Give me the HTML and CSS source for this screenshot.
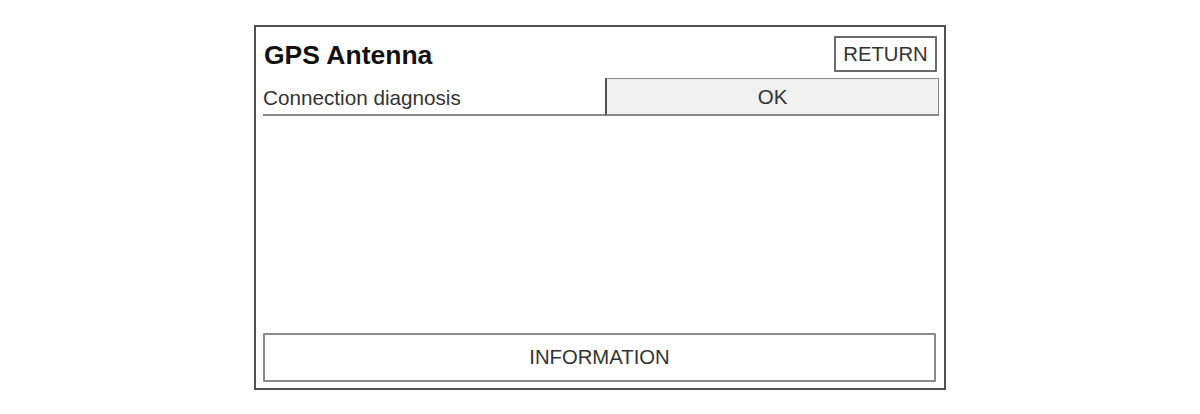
FILE: index.html
```html
<!DOCTYPE html>
<html>
<head>
<meta charset="utf-8">
<link rel="stylesheet" href="styles.css">
</head>
<body>
<div class="frame">
  <div class="header">
    <h1 class="title">GPS Antenna</h1>
    <div class="return-btn">RETURN</div>
  </div>
  <div class="row">
    <div class="label">Connection diagnosis</div>
    <div class="value">OK</div>
  </div>
  <div class="spacer"></div>
  <div class="info-btn">INFORMATION</div>
</div>
</body>
</html>
```
FILE: styles.css
```css
html, body {
  margin: 0;
  padding: 0;
  background: #ffffff;
}
body {
  font-family: "Liberation Sans", Arial, sans-serif;
  color: #2a2a2a;
}
.frame {
  box-sizing: border-box;
  width: 692px;
  height: 365px;
  margin: 25px auto 0;
  border: 2px solid #505050;
  padding: 9px 5px 6px 7px;
  display: flex;
  flex-direction: column;
}
.header {
  display: flex;
  justify-content: space-between;
  align-items: flex-start;
  height: 36px;
  margin-right: 2px;
}
.title {
  margin: 6px 0 0 1px;
  font-size: 26.5px;
  font-weight: bold;
  color: #111;
  line-height: 26px;
}
.return-btn {
  box-sizing: border-box;
  width: 103px;
  height: 36px;
  border: 2px solid #6a6a6a;
  border-radius: 1px;
  font-size: 20.3px;
  line-height: 32px;
  text-align: center;
  color: #333;
}
.row {
  display: flex;
  margin-top: 6px;
  height: 38px;
}
.label {
  flex: 1;
  box-sizing: border-box;
  border-bottom: 2px solid #8a8a8a;
  font-size: 20.7px;
  line-height: 38px;
  padding-top: 1px;
  color: #333;
}
.value {
  box-sizing: border-box;
  width: 334px;
  background: #f0f0f0;
  border: 1px solid #8a8a8a;
  border-left: 2px solid #505050;
  border-bottom: 2px solid #8a8a8a;
  font-size: 20.5px;
  line-height: 36px;
  text-align: center;
  color: #333;
}
.spacer {
  flex: 1;
}
.info-btn {
  box-sizing: border-box;
  height: 49px;
  margin-right: 3px;
  border: 2px solid #8a8a8a;
  border-radius: 1px;
  font-size: 20.3px;
  line-height: 45px;
  text-align: center;
  color: #333;
}
```
